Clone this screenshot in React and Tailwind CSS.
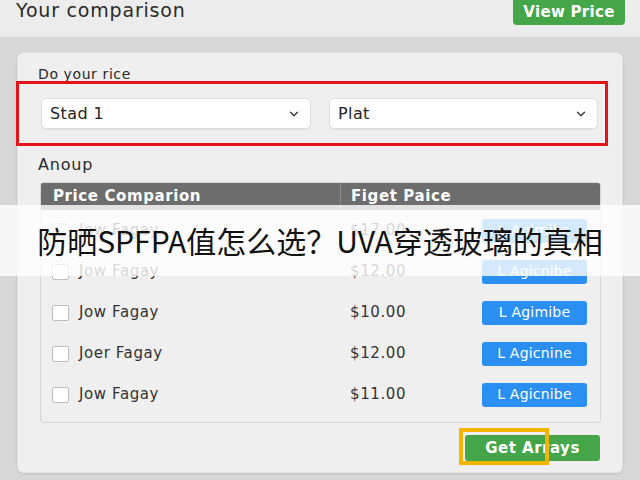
import React from 'react'
import { ChevronDown } from 'lucide-react'

const rows = [
  { name: 'Jow Fagay',  price: '$17.00', action: 'L Agirnibe' },
  { name: 'Jow Fagay',  price: '$12.00', action: 'L Agicnibe' },
  { name: 'Jow Fagay',  price: '$10.00', action: 'L Agimibe' },
  { name: 'Joer Fagay', price: '$12.00', action: 'L Agicnine' },
  { name: 'Jow Fagay',  price: '$11.00', action: 'L Agicnibe' },
]

function Select({ label, width }) {
  return (
    <div className={`${width} h-[31px] bg-white rounded-[5px] border border-[#dedede] flex items-center justify-between pl-[8px] pr-[9px] shadow-[0_1px_1px_rgba(0,0,0,0.06)]`}>
      <span className="text-[16px] tracking-[0.4px] text-[#222]">{label}</span>
      <ChevronDown size={14} strokeWidth={2.25} className="text-[#333]" />
    </div>
  )
}

export default function App() {
  return (
    <div className="relative w-[640px] h-[480px] overflow-hidden bg-[#d8d8d8] font-['DejaVu_Sans',sans-serif]">
      {/* top bar */}
      <header className="h-[37px] bg-[#ececec] flex items-start justify-between pl-[16px] pr-[15px]">
        <h1 className="text-[19px] tracking-[0.8px] leading-none text-[#2a2a2a] pt-[1px]">Your comparison</h1>
        <button className="-mt-[6px] h-[31px] w-[112px] pt-[6px] rounded-[4px] bg-[#44a649] text-white text-[15px] font-semibold tracking-[0.3px]">
          View Price
        </button>
      </header>

      {/* card */}
      <div className="mx-[17px] mt-[15px] h-[421px] bg-[#efefef] rounded-[6px] border border-[#e2e2e2] shadow-[0_1px_3px_rgba(0,0,0,0.12)] px-[22px] pt-[14px]">
        <p className="text-[14px] tracking-[0.6px] text-[#2a2a2a] leading-none -ml-[2px]">Do your rice</p>
        <div className="flex gap-[18px] mt-[17px] pl-[1px]">
          <Select label="Stad 1" width="w-[270px]" />
          <Select label="Plat" width="w-[269px]" />
        </div>

        <p className="text-[16px] tracking-[0.8px] text-[#2a2a2a] leading-none mt-[28px] -ml-[2px]">Anoup</p>

        {/* table */}
        <div className="mt-[9px] w-[561px] border border-[#d6d6d6] rounded-[3px] overflow-hidden">
          <div className="h-[27px] bg-[#6d6d6d] flex items-center text-white text-[15px] font-bold tracking-[0.6px]">
            <div className="w-[300px] pl-[12px] border-r border-[#8a8a8a] h-full flex items-center">Price Comparion</div>
            <div className="pl-[10px]">Figet Paice</div>
          </div>
          <div className="pb-[7px]">
            {rows.map((r, i) => (
              <div key={i} className="h-[41px] flex items-center text-[15px] tracking-[0.6px] text-[#333]">
                <div className="w-[300px] flex items-center pl-[11px] gap-[10px]">
                  <span className="w-[17px] h-[16px] bg-white border border-[#bdbdbd] rounded-[2px]" />
                  <span>{r.name}</span>
                </div>
                <div className="w-[141px] pl-[9px]">{r.price}</div>
                <button className="w-[105px] h-[24px] rounded-[3px] bg-[#2a8ff0] text-white text-[14px] font-medium tracking-[0.2px]">
                  {r.action}
                </button>
              </div>
            ))}
          </div>
        </div>

        <div className="flex justify-end mt-[12px]">
          <button className="w-[135px] h-[26px] rounded-[3px] bg-[#44a649] text-white text-[15px] font-semibold tracking-[0.5px]">
            Get Arrays
          </button>
        </div>
      </div>

      {/* annotation boxes */}
      <div className="absolute left-[16px] top-[81px] w-[592px] h-[65px] border-[3px] border-[#e3131b]" />
      <div className="absolute left-[459px] top-[428px] w-[90px] h-[37px] border-[4px] border-[#f4b400]" />

      {/* caption banner */}
      <div className="absolute left-0 top-[205px] w-[640px] h-[71px] bg-white/80 flex items-center justify-center">
        <span className="text-[30px] text-[#111] font-['Noto_Sans_CJK_SC',sans-serif]">
          防晒SPFPA值怎么选？UVA穿透玻璃的真相
        </span>
      </div>
    </div>
  )
}
